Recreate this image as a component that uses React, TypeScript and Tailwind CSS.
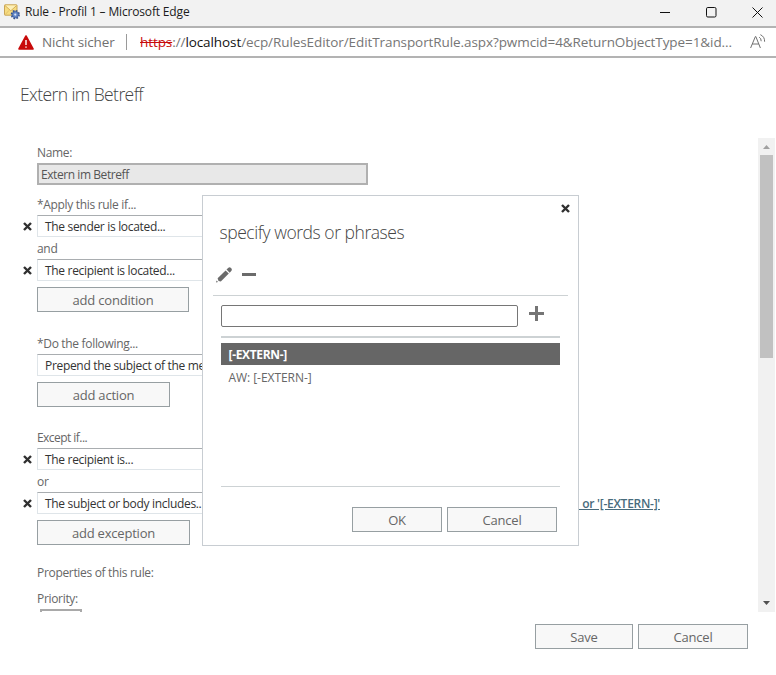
import type { ReactNode } from "react";

function CrossIcon({ className = "" }: { className?: string }) {
  return (
    <svg viewBox="0 0 9 9" className={`h-[9px] w-[9px] shrink-0 ${className}`} aria-hidden="true">
      <path d="M1 1l7 7M8 1L1 8" stroke="#303030" strokeWidth="2.4" fill="none" />
    </svg>
  );
}

function RuleIcon() {
  return (
    <svg viewBox="0 0 16 16" className="h-4 w-4 shrink-0" aria-hidden="true">
      <rect x="0.5" y="0.8" width="12.5" height="10.4" rx="0.6" fill="#f7dc80" stroke="#c9a557" />
      <path d="M1 1.5l5.8 5.3L12.6 1.5" fill="#fdf0b8" stroke="#d0a850" strokeWidth="0.9" />
      <path d="M1 10.8l4-4.4M12.6 10.8l-4-4.4" stroke="#d8b560" strokeWidth="0.7" />
      <circle cx="11.3" cy="10.6" r="3.7" fill="none" stroke="#35528f" strokeWidth="1.8" strokeDasharray="1.7 1.2" />
      <circle cx="11.3" cy="10.6" r="3.1" fill="#6488c8" stroke="#3c5da0" strokeWidth="0.8" />
      <circle cx="11.3" cy="10.6" r="1.1" fill="#dce6f7" />
    </svg>
  );
}

function TitleBar() {
  return (
    <header className="flex h-7 items-center border-b-2 border-[#b3b3b3] bg-[#f2f2f2] pl-1 pr-[13px]">
      <div className="-mt-[2px] flex flex-1 items-center gap-[5px]">
        <RuleIcon />
        <span className="text-[12px] leading-4 tracking-[-0.16px] text-[#1c1c1c]">Rule - Profil 1 – Microsoft Edge</span>
      </div>
      <div className="-mt-[2px] flex items-center gap-[35px]">
        <svg viewBox="0 0 11 11" className="h-[11px] w-[11px]" aria-hidden="true">
          <path d="M0 5.5h10" stroke="#111" />
        </svg>
        <svg viewBox="0 0 11 11" className="h-[11px] w-[11px]" aria-hidden="true">
          <rect x="0.5" y="0.5" width="9.5" height="9.5" rx="1.3" fill="none" stroke="#111" />
        </svg>
        <svg viewBox="0 0 11 11" className="h-[11px] w-[11px]" aria-hidden="true">
          <path d="M0.5 0.5l10 10M10.5 0.5l-10 10" stroke="#111" />
        </svg>
      </div>
    </header>
  );
}

function AddressBar() {
  return (
    <div className="flex h-[30px] items-center border-b-2 border-[#b3b3b3] bg-white pl-[18px] pr-[10px]">
      <svg viewBox="0 0 16 15" className="h-[15px] w-4 shrink-0" aria-hidden="true">
        <path d="M8 1L15 14H1z" fill="#c80a0a" stroke="#c80a0a" strokeWidth="1.6" strokeLinejoin="round" />
        <path d="M8 5v5M8 11.4v1.4" stroke="#fff" strokeWidth="1.4" />
      </svg>
      <span className="ml-2 w-[84px] whitespace-nowrap text-[13.5px] leading-5 tracking-[-0.15px] text-[#707070]">
        Nicht sicher
      </span>
      <span className="h-4 w-px bg-[#9a9a9a]" />
      <span className="ml-[13px] flex-1 whitespace-nowrap text-[13.5px] leading-5 tracking-[-0.085px] text-[#767676]">
        <span className="text-[#c80a0a] line-through">https</span>
        ://<span className="text-[#111]">localhost</span>
        /ecp/RulesEditor/EditTransportRule.aspx?pwmcid=4&amp;ReturnObjectType=1&amp;id...
      </span>
      <svg viewBox="0 0 16 15" className="-mt-px h-[15px] w-4 shrink-0" fill="none" stroke="#707070" aria-hidden="true">
        <path d="M0.6 14L5.4 2.5h.4L10.4 14M2.2 10h6.6" />
        <path d="M9.2 3.2q2 1 2 4M10.4 0.7q4.4 2 4.2 7" />
      </svg>
    </div>
  );
}

function Button({ className = "", children }: { className?: string; children: ReactNode }) {
  return (
    <button
      className={`block h-[25px] border border-[#979fa2] bg-[#f8f8f8] pt-px text-center text-[13px] leading-[23px] tracking-[-0.2px] text-[#666] ${className}`}
    >
      {children}
    </button>
  );
}

function Label({ className = "", children }: { className?: string; children: ReactNode }) {
  return (
    <div className={`ml-[37px] h-4 whitespace-nowrap text-[12px] leading-4 tracking-[-0.32px] text-[#666] ${className}`}>
      {children}
    </div>
  );
}

function RuleRow({ removable = true, children }: { removable?: boolean; children: ReactNode }) {
  return (
    <div className="flex h-[22px] items-center pl-[22px]">
      <span className="w-[15px]">{removable && <CrossIcon className="ml-[0.5px]" />}</span>
      <div className="h-[22px] w-[178px] whitespace-nowrap border border-[#dfe5e9] border-t-[#a9adb0] pl-[7px] text-[12px] leading-[22px] tracking-[-0.32px] text-[#333]">
        {children}
      </div>
    </div>
  );
}

function Scrollbar() {
  return (
    <div className="flex h-[474px] w-[17px] shrink-0 flex-col items-center bg-[#f1f1f1]">
      <svg viewBox="0 0 17 17" className="h-[17px] w-[17px]" aria-hidden="true">
        <path d="M5 11l3.5-4L12 11z" fill="#a0a0a0" />
      </svg>
      <div className="h-[203px] w-[13px] bg-[#c1c1c1]" />
      <svg viewBox="0 0 17 17" className="mt-auto h-[17px] w-[17px]" aria-hidden="true">
        <path d="M5 6l3.5 4L12 6z" fill="#505050" />
      </svg>
    </div>
  );
}

function RuleForm() {
  return (
    <div className="h-[474px] flex-1 overflow-hidden pt-[7px]">
      <Label className="tracking-[-0.2px]">Name:</Label>
      <div className="ml-[37px] mt-[2px] h-[22px] w-[331px] border-2 border-[#b0b0b0] bg-[#e8e8e8] pl-[2px] text-[12px] leading-[20px] tracking-[-0.43px] text-[#555]">
        Extern im Betreff
      </div>

      <Label className="mt-3 tracking-[-0.4px]">*Apply this rule if...</Label>
      <div className="mt-[2px]">
        <RuleRow>The sender is located...</RuleRow>
      </div>
      <Label className="mb-[2px] mt-1">and</Label>
      <RuleRow>The recipient is located...</RuleRow>
      <Button className="ml-[37px] mt-[6px] w-[152px]">add condition</Button>

      <Label className="mb-[2px] mt-6">*Do the following...</Label>
      <RuleRow removable={false}>Prepend the subject of the me...</RuleRow>
      <Button className="ml-[37px] mt-[6px] w-[133px]">add action</Button>

      <Label className="mb-[2px] mt-[23px] tracking-[-0.55px]">Except if...</Label>
      <RuleRow>The recipient is...</RuleRow>
      <Label className="mb-[2px] mt-1">or</Label>
      <div className="flex items-center">
        <RuleRow>The subject or body includes...</RuleRow>
        <span className="h-[22px] w-[445px] whitespace-pre text-right text-[12px] font-semibold leading-[24px] tracking-[-0.27px] text-[#486b7c] underline">
          {"  or '[-EXTERN-]'"}
        </span>
      </div>
      <Button className="ml-[37px] mt-[6px] w-[153px]">add exception</Button>

      <Label className="mt-5">Properties of this rule:</Label>
      <Label className="mt-[10px]">Priority:</Label>
      <div className="ml-10 mt-[2px] h-[22px] w-[42px] border-2 border-[#a9a9a9] bg-white" />
    </div>
  );
}

function WordsDialog() {
  return (
    <div className="absolute left-[202px] top-[195px] h-[351px] w-[377px] border border-[#c8cdd2] bg-white">
      <div className="flex justify-end pr-2 pt-[7.5px]">
        <CrossIcon />
      </div>
      <h2 className="ml-[16.5px] mt-[7.5px] text-[17.5px] font-light leading-6 tracking-[-0.45px] text-[#444]">
        specify words or phrases
      </h2>
      <div className="mx-[10px] mt-[17px] flex h-[35px] items-start gap-[10px] border-b border-[#cdd2d4] pl-[3px] pt-[5px]">
        <svg viewBox="0 0 16 17" className="h-[17px] w-4" fill="#6b6b6b" aria-hidden="true">
          <path d="M0 16.5l.6-2 1.4 1.5z" />
          <path d="M1.6 12.2L9.6 4.4l3.2 3.2-8 7.8-2.3-.5z" />
          <path d="M10.5 3.5l1.9-1.8q1.2-1 2.6.2t.5 2.9l-1.8 1.9z" />
        </svg>
        <svg viewBox="0 0 14 17" className="h-[17px] w-[14px]" aria-hidden="true">
          <path d="M0 8.5h14" stroke="#6b6b6b" strokeWidth="3" />
        </svg>
      </div>
      <div className="ml-[18px] mt-[9px] flex items-start">
        <input className="h-[22px] w-[297px] rounded-[2px] border border-[#767676] bg-white px-1 text-[12px]" />
        <svg viewBox="0 0 15 15" className="ml-[11px] mt-[1px] h-[15px] w-[15px]" aria-hidden="true">
          <path d="M0 7.5h15M7.5 0v15" stroke="#757575" strokeWidth="3" />
        </svg>
      </div>
      <div className="ml-[18px] mt-[9px] h-[151px] w-[339px] border-b border-t-2 border-b-[#cdd2d4] border-t-[#cdd2d4] pt-[5px] text-[12px] leading-[24px]">
        <div className="h-[22px] bg-[#666] pl-[7.5px] font-bold tracking-[-0.33px] text-white">[-EXTERN-]</div>
        <div className="pl-[7.5px] leading-[25px] tracking-[-0.05px] text-[#666]">AW: [-EXTERN-]</div>
      </div>
      <div className="mr-[21px] mt-5 flex justify-end gap-[5px]">
        <Button className="w-[90px]">OK</Button>
        <Button className="w-[110px]">Cancel</Button>
      </div>
    </div>
  );
}

export default function App() {
  return (
    <div className="relative h-[675px] w-[776px] overflow-hidden bg-white font-['Open_Sans','Noto_Sans',sans-serif]">
      <TitleBar />
      <AddressBar />
      <h1 className="ml-5 mt-6 h-14 text-[17.5px] font-light leading-6 tracking-[-0.58px] text-[#444]">
        Extern im Betreff
      </h1>
      <main className="flex pr-px">
        <RuleForm />
        <Scrollbar />
      </main>
      <footer className="mr-7 mt-3 flex justify-end gap-[5px]">
        <Button className="w-[98px]">Save</Button>
        <Button className="w-[110px]">Cancel</Button>
      </footer>
      <WordsDialog />
    </div>
  );
}
